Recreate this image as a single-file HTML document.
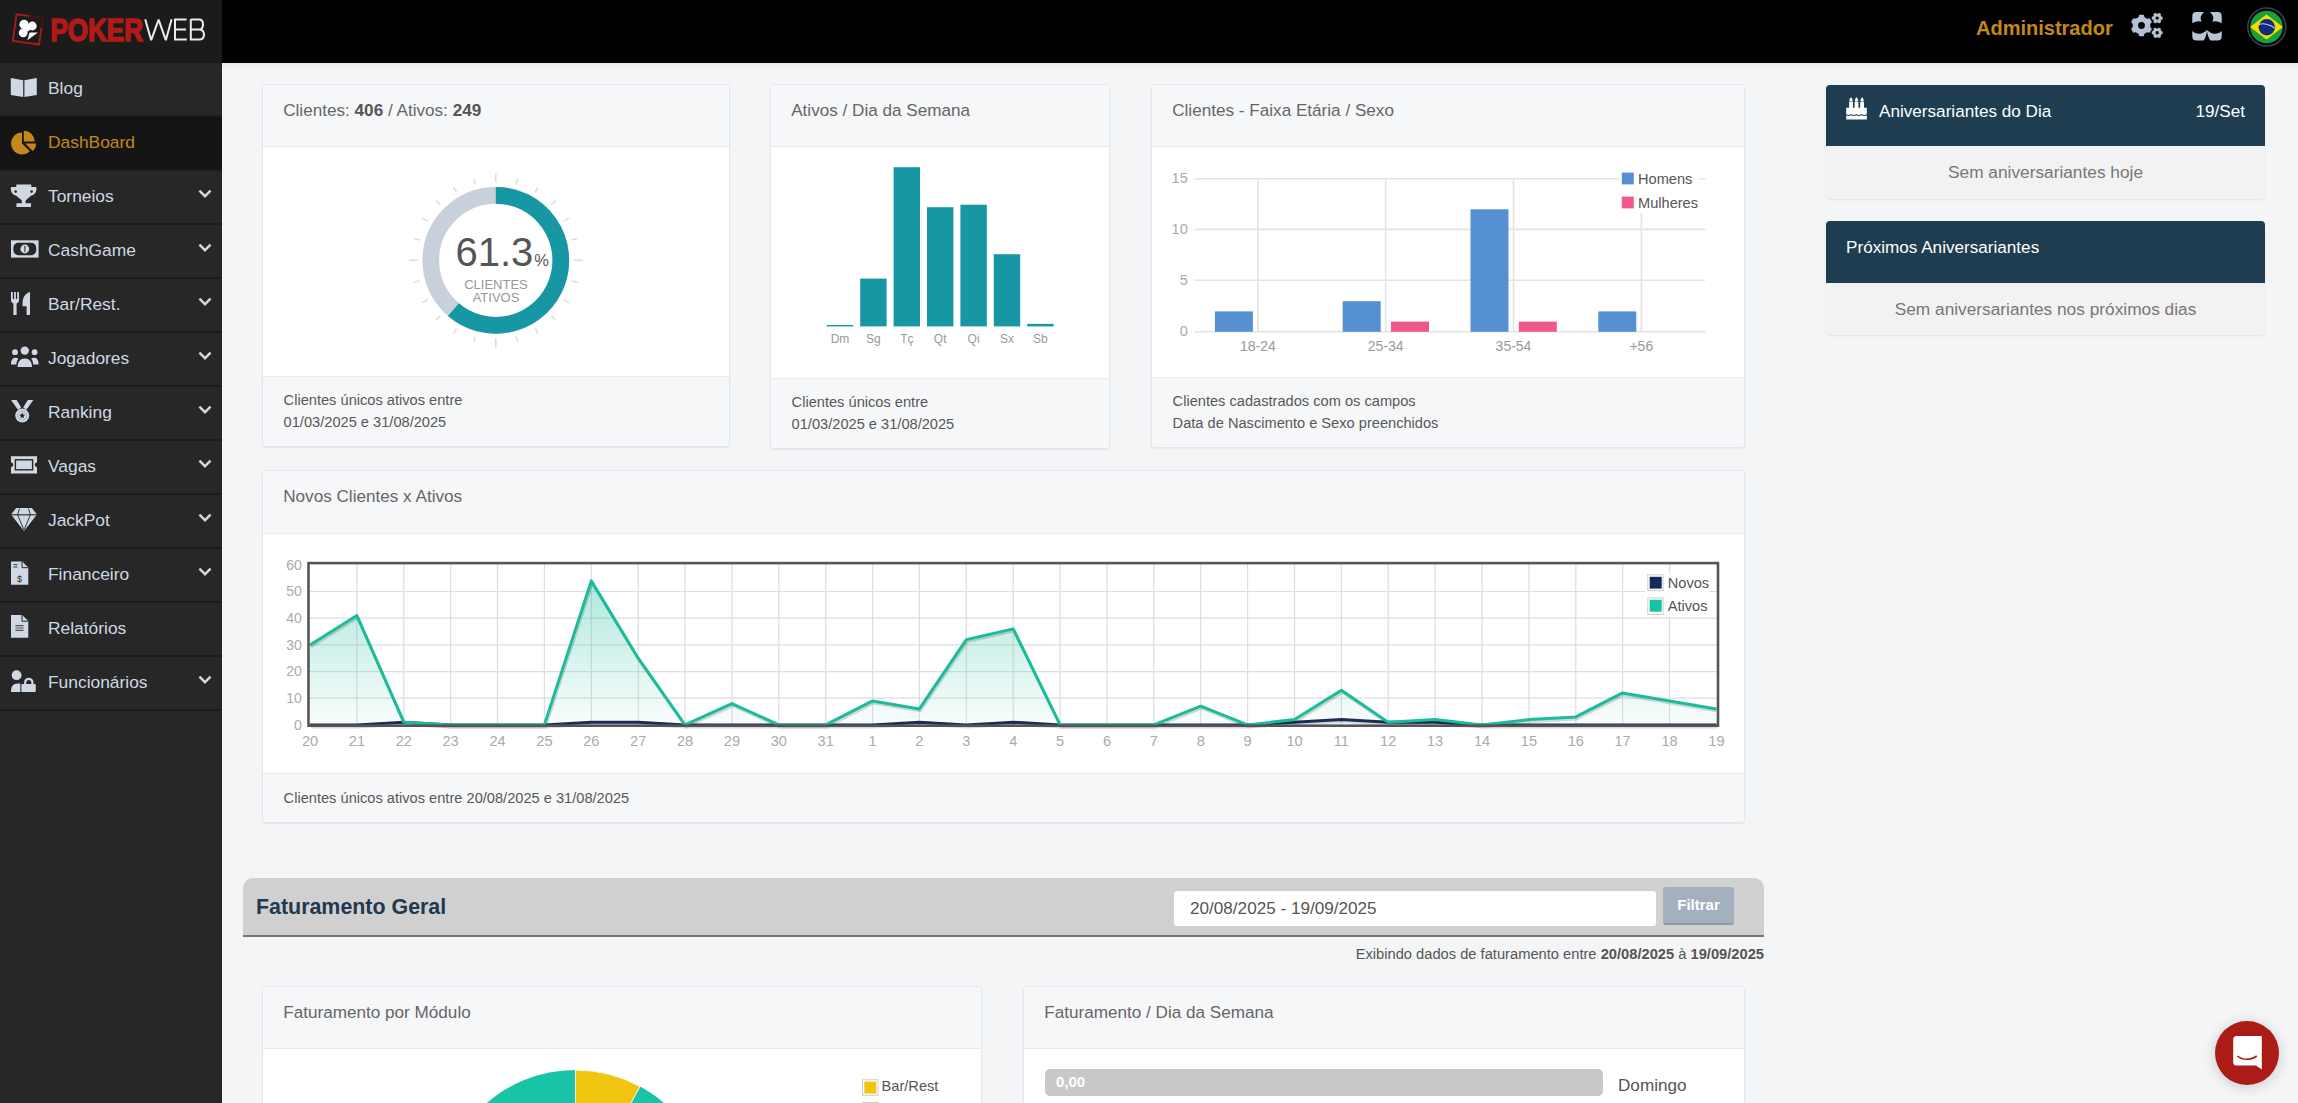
<!DOCTYPE html>
<html><head><meta charset="utf-8">
<style>
*{box-sizing:border-box;margin:0;padding:0}
html,body{width:2298px;height:1103px;overflow:hidden;background:#f4f5f7;font-family:"Liberation Sans",sans-serif;position:relative}
.abs{position:absolute}
#top{position:absolute;left:0;top:0;width:2298px;height:63px;background:#000}
#logo{position:absolute;left:0;top:0;width:222px;height:63px;background:#1b1b1b}
#side{position:absolute;left:0;top:63px;width:222px;height:1040px;background:#272727}
.mi{position:absolute;left:0;width:222px;height:54px;border-bottom:2px solid #1b1b1b;color:#cfd8e3;font-size:17.4px}
.mi .t{position:absolute;left:48px;top:15px;line-height:20px}
.mi.act{background:#141414;color:#c4871a}
.mi svg.ic{position:absolute;left:0;top:0}
.chev{position:absolute;left:198.3px;top:17.8px}
#shadow{position:absolute;left:222px;top:63px;width:2076px;height:8px;background:linear-gradient(#e8e9eb,#f4f5f7)}
.card{position:absolute;background:#fff;border:1px solid #e3e6ea;border-radius:4px;box-shadow:0 1px 2px rgba(0,0,0,0.06);overflow:hidden}
.card .hd{position:absolute;left:0;top:0;right:0;background:#f6f7f9;border-bottom:1px solid #e6e9ed;color:#666;font-size:17.14px}
.card .hd span{position:absolute;left:20.2px;line-height:20px}
.card .ft{position:absolute;left:0;bottom:0;right:0;background:#f6f7f9;border-top:1px solid #e6e9ed;color:#585858;font-size:14.63px;line-height:21.7px}
.card .ft div{position:absolute;left:20.6px}
.bd{position:absolute;left:1826px;width:439px;border-radius:4px;overflow:hidden;box-shadow:0 1px 2px rgba(0,0,0,0.08)}
.bd .h{position:absolute;left:0;top:0;width:439px;height:61px;background:#1e3d50;color:#fff;font-size:17.14px}
.bd .b{position:absolute;left:0;top:61px;width:439px;height:53px;background:#f2f2f2;color:#777;font-size:17.3px;text-align:center;line-height:20px}
</style></head><body>
<div id="top"></div>
<div id="logo"></div>
<div id="side"></div>
<div id="shadow"></div>
<div class="mi" style="top:63px"><svg class="ic" width="45" height="52" viewBox="0 0 45 52"><path d="M10.8,15 L23.2,17.2 L23.2,34 L10.8,32 Z M24.4,17.2 L36.8,15 L36.8,32 L24.4,34 Z" fill="#cfd8e3"/></svg><span class="t">Blog</span></div>
<div class="mi act" style="top:117px"><svg class="ic" width="45" height="52" viewBox="0 0 45 52"><path d="M22,26.5 L22,15.5 A11,11 0 1,0 29.8,34.3 Z" fill="#c4871a"/><path d="M23.8,24.6 L23.8,13.8 A10.8,10.8 0 0,1 34.6,24.6 Z" fill="#c4871a"/><path d="M25.2,26.4 L36,26.4 A10.8,10.8 0 0,1 32.8,34 Z" fill="#c4871a"/></svg><span class="t">DashBoard</span></div>
<div class="mi" style="top:171px"><svg class="ic" width="45" height="52" viewBox="0 0 45 52"><path d="M16.3,13.4 H31.3 V15.9 H36.4 V18.6 C36.4,21.6 34,24.4 30.6,25 C29.2,26.6 27.2,28 25.6,29.4 V32.2 H31 V36 H16.4 V32.2 H21.8 V29.4 C20.2,28 18.2,26.6 16.8,25 C13.4,24.4 10.9,21.6 10.9,18.6 V15.9 H16.3 Z" fill="#cfd8e3"/><circle cx="15.7" cy="20.6" r="1.3" fill="#272727"/><circle cx="31.6" cy="20.6" r="1.3" fill="#272727"/></svg><span class="t">Torneios</span><svg class="chev" width="14" height="10" viewBox="0 0 14 10"><path d="M1.4,1.6 L7,7.2 L12.6,1.6" stroke="#cfd8e3" stroke-width="2.4" fill="none"/></svg></div>
<div class="mi" style="top:225px"><svg class="ic" width="45" height="52" viewBox="0 0 45 52"><rect x="11" y="15.3" width="27.6" height="17.3" fill="#cfd8e3"/><rect x="13.4" y="17.7" width="22.8" height="12.5" rx="5" fill="#272727"/><circle cx="24.8" cy="24" r="4.4" fill="#cfd8e3"/><path d="M24,21.6 L25.4,21 V27 H24.4 V22.4 Z" fill="#272727"/></svg><span class="t">CashGame</span><svg class="chev" width="14" height="10" viewBox="0 0 14 10"><path d="M1.4,1.6 L7,7.2 L12.6,1.6" stroke="#cfd8e3" stroke-width="2.4" fill="none"/></svg></div>
<div class="mi" style="top:279px"><svg class="ic" width="45" height="52" viewBox="0 0 45 52"><path d="M11,13 H12.8 V20 H14.1 V13 H15.9 V20 H17.2 V13 H19 V21.5 C19,23.1 17.8,24.2 16.6,24.4 V36 H13.4 V24.4 C12.2,24.2 11,23.1 11,21.5 Z" fill="#cfd8e3"/><path d="M30,13 C25.6,14.2 22.6,18.4 22.6,24 V27.2 H26.6 V36 H30 Z" fill="#cfd8e3"/></svg><span class="t">Bar/Rest.</span><svg class="chev" width="14" height="10" viewBox="0 0 14 10"><path d="M1.4,1.6 L7,7.2 L12.6,1.6" stroke="#cfd8e3" stroke-width="2.4" fill="none"/></svg></div>
<div class="mi" style="top:333px"><svg class="ic" width="45" height="52" viewBox="0 0 45 52"><circle cx="24.8" cy="17.6" r="4.2" fill="#cfd8e3"/><path d="M17.6,34 C17.6,28.6 20.4,25.4 24.8,25.4 C29.2,25.4 32,28.6 32,34 Z" fill="#cfd8e3"/><circle cx="15" cy="19.2" r="2.9" fill="#cfd8e3"/><path d="M11,31.4 C11,27.4 12.6,24.8 15.4,24.8 C16.6,24.8 17.6,25.2 18.4,25.8 C17,27.4 16.4,29.4 16.4,31.4 Z" fill="#cfd8e3"/><circle cx="34.6" cy="19.2" r="2.9" fill="#cfd8e3"/><path d="M38.6,31.4 C38.6,27.4 37,24.8 34.2,24.8 C33,24.8 32,25.2 31.2,25.8 C32.6,27.4 33.2,29.4 33.2,31.4 Z" fill="#cfd8e3"/></svg><span class="t">Jogadores</span><svg class="chev" width="14" height="10" viewBox="0 0 14 10"><path d="M1.4,1.6 L7,7.2 L12.6,1.6" stroke="#cfd8e3" stroke-width="2.4" fill="none"/></svg></div>
<div class="mi" style="top:387px"><svg class="ic" width="45" height="52" viewBox="0 0 45 52"><path d="M11,13 H16.6 L21.2,20.6 L18,22.8 Z M33.4,13 H27.8 L23.2,20.6 L26.4,22.8 Z" fill="#cfd8e3"/><circle cx="22.2" cy="28.6" r="7" fill="#cfd8e3"/><circle cx="22.2" cy="28.6" r="4.6" fill="none" stroke="#9aa4ae" stroke-width="0.8"/><path d="M22.2,25.6 L23.1,27.6 L25.2,27.8 L23.6,29.2 L24.1,31.3 L22.2,30.2 L20.3,31.3 L20.8,29.2 L19.2,27.8 L21.3,27.6 Z" fill="#272727"/></svg><span class="t">Ranking</span><svg class="chev" width="14" height="10" viewBox="0 0 14 10"><path d="M1.4,1.6 L7,7.2 L12.6,1.6" stroke="#cfd8e3" stroke-width="2.4" fill="none"/></svg></div>
<div class="mi" style="top:441px"><svg class="ic" width="45" height="52" viewBox="0 0 45 52"><path d="M11,15.2 H37 V21.6 A2.2,2.2 0 0,0 37,26 V32.4 H11 V26 A2.2,2.2 0 0,0 11,21.6 Z" fill="#cfd8e3"/><rect x="15.4" y="18.8" width="17.2" height="10" fill="#cfd8e3" stroke="#272727" stroke-width="1.4"/></svg><span class="t">Vagas</span><svg class="chev" width="14" height="10" viewBox="0 0 14 10"><path d="M1.4,1.6 L7,7.2 L12.6,1.6" stroke="#cfd8e3" stroke-width="2.4" fill="none"/></svg></div>
<div class="mi" style="top:495px"><svg class="ic" width="45" height="52" viewBox="0 0 45 52"><path d="M16.2,13 H31.8 L37,19.6 L24,36 L11,19.6 Z" fill="#cfd8e3"/><path d="M11,19.8 H37" stroke="#272727" stroke-width="1.1"/><path d="M19.5,13.5 L17.6,19.8 L24,35 M28.5,13.5 L30.4,19.8 L24,35" stroke="#272727" stroke-width="0.9" fill="none"/></svg><span class="t">JackPot</span><svg class="chev" width="14" height="10" viewBox="0 0 14 10"><path d="M1.4,1.6 L7,7.2 L12.6,1.6" stroke="#cfd8e3" stroke-width="2.4" fill="none"/></svg></div>
<div class="mi" style="top:549px"><svg class="ic" width="45" height="52" viewBox="0 0 45 52"><path d="M11,12.4 H22.2 L28.3,18.5 V35.7 H11 Z" fill="#cfd8e3"/><path d="M22,12.6 V18.7 H28.1" stroke="#272727" stroke-width="1" fill="none"/><path d="M13.4,15.6 H17.4 M13.4,18 H17.4" stroke="#272727" stroke-width="0.9"/><text x="19.6" y="32.6" font-size="9" font-family="Liberation Sans" text-anchor="middle" fill="#272727">$</text></svg><span class="t">Financeiro</span><svg class="chev" width="14" height="10" viewBox="0 0 14 10"><path d="M1.4,1.6 L7,7.2 L12.6,1.6" stroke="#cfd8e3" stroke-width="2.4" fill="none"/></svg></div>
<div class="mi" style="top:603px"><svg class="ic" width="45" height="52" viewBox="0 0 45 52"><path d="M11,11.9 H22.2 L28.3,18 V34.8 H11 Z" fill="#cfd8e3"/><path d="M22,12.1 V18.2 H28.1" stroke="#272727" stroke-width="1" fill="none"/><path d="M15.4,22.6 H23.6 M15.4,25 H23.6 M15.4,27.4 H23.6" stroke="#555" stroke-width="1.1"/></svg><span class="t">Relatórios</span></div>
<div class="mi" style="top:657px"><svg class="ic" width="45" height="52" viewBox="0 0 45 52"><circle cx="16.6" cy="18.2" r="4.9" fill="#cfd8e3"/><path d="M11,35 C11,29.4 13,26.6 17.6,26.6 H20.4 V35 Z" fill="#cfd8e3"/><path d="M25.2,27.4 V25.4 A3.6,3.6 0 0,1 32.4,25.4 V27.4" stroke="#cfd8e3" stroke-width="2.2" fill="none"/><rect x="21.4" y="27" width="14.4" height="8" rx="1" fill="#cfd8e3"/></svg><span class="t">Funcionários</span><svg class="chev" width="14" height="10" viewBox="0 0 14 10"><path d="M1.4,1.6 L7,7.2 L12.6,1.6" stroke="#cfd8e3" stroke-width="2.4" fill="none"/></svg></div>
<svg class="abs" style="left:0;top:0" width="222" height="63" viewBox="0 0 222 63">
<g fill="none" stroke-width="1.8" stroke-linejoin="round">
<path d="M29.8,16.2 L16.5,14.4 L12.8,40.8 L39.1,44.5 L41.4,28" stroke="#aa1b19"/>
<path d="M29.8,16.2 L42.8,18.2 L41.4,28" stroke="#4a1412"/>
</g>
<g fill="#fff">
<circle cx="24.1" cy="24.5" r="4.7"/><circle cx="32.3" cy="26" r="4.4"/><circle cx="23.2" cy="32.8" r="4.4"/><circle cx="27" cy="28.4" r="3"/>
<path d="M29.6,32.4 L37.9,32.6 L27.4,40.2 Z"/>
</g>
<text x="50.5" y="41" font-family="Liberation Sans" font-weight="bold" font-size="30.6" fill="#b21a18" stroke="#b21a18" stroke-width="1.6" textLength="92.5" lengthAdjust="spacingAndGlyphs">POKER</text>
<g fill="none" stroke="#ececec" stroke-width="2" stroke-linejoin="miter">
<path d="M145.2,19.2 L151.2,40.2 L158.6,19.6 L165.8,40.2 L171.6,19.2" stroke-linejoin="bevel"/>
<path d="M186.6,19.6 H175 V39.6 H186.8 M175,29.6 H186"/>
<path d="M190.8,19.6 H199 C202,19.6 203,21.6 203,24.4 C203,27.2 201.6,29.6 198.6,29.6 H190.8 M198.6,29.6 C202.4,29.6 204,31.6 204,34.6 C204,38 202.4,39.6 199.2,39.6 H190.8 V19.2"/>
</g>
</svg>
<div class="abs" style="left:1976px;top:16px;font-size:20px;font-weight:bold;color:#c4871a;line-height:24px">Administrador</div>
<svg class="abs" style="left:2125px;top:8px" width="45" height="36" viewBox="2125 8 45 36">
<g fill="#b4c2d6" fill-rule="evenodd"><path d="M2138.49,17.13 L2139.21,14.74 L2143.79,14.74 L2144.51,17.13 L2147.24,18.70 L2149.67,18.14 L2151.96,22.10 L2150.26,23.92 L2150.26,27.08 L2151.96,28.90 L2149.67,32.86 L2147.24,32.30 L2144.51,33.87 L2143.79,36.26 L2139.21,36.26 L2138.49,33.87 L2135.76,32.30 L2133.33,32.86 L2131.04,28.90 L2132.74,27.08 L2132.74,23.92 L2131.04,22.10 L2133.33,18.14 L2135.76,18.70 Z M2144.90,25.50 A3.4,3.4 0 1,0 2138.10,25.50 A3.4,3.4 0 1,0 2144.90,25.50 Z"/><path d="M2157.77,13.74 L2158.79,12.73 L2161.05,14.04 L2160.69,15.42 L2161.27,16.42 L2162.65,16.79 L2162.65,19.41 L2161.27,19.78 L2160.69,20.78 L2161.05,22.16 L2158.79,23.47 L2157.77,22.46 L2156.63,22.46 L2155.61,23.47 L2153.35,22.16 L2153.71,20.78 L2153.13,19.78 L2151.75,19.41 L2151.75,16.79 L2153.13,16.42 L2153.71,15.42 L2153.35,14.04 L2155.61,12.73 L2156.63,13.74 Z M2158.90,18.10 A1.7,1.7 0 1,0 2155.50,18.10 A1.7,1.7 0 1,0 2158.90,18.10 Z"/><path d="M2157.77,28.44 L2158.79,27.43 L2161.05,28.74 L2160.69,30.12 L2161.27,31.12 L2162.65,31.49 L2162.65,34.11 L2161.27,34.48 L2160.69,35.48 L2161.05,36.86 L2158.79,38.17 L2157.77,37.16 L2156.63,37.16 L2155.61,38.17 L2153.35,36.86 L2153.71,35.48 L2153.13,34.48 L2151.75,34.11 L2151.75,31.49 L2153.13,31.12 L2153.71,30.12 L2153.35,28.74 L2155.61,27.43 L2156.63,28.44 Z M2158.90,32.80 A1.7,1.7 0 1,0 2155.50,32.80 A1.7,1.7 0 1,0 2158.90,32.80 Z"/></g>
</svg>
<svg class="abs" style="left:2190px;top:10px" width="34" height="33" viewBox="2190 10 34 33">
<g fill="#b8c5d6">
<path d="M2192.3,23.3 V16.1 Q2192.3,12.1 2196.3,12.1 H2204 Q2198.6,17 2201.7,21.7 Q2197,20.4 2192.3,23.3 Z"/>
<path d="M2221.7,23.3 V16.1 Q2221.7,12.1 2217.7,12.1 H2210 Q2215.4,17 2212.3,21.7 Q2217,20.4 2221.7,23.3 Z"/>
<path d="M2192.3,30.9 Q2198.4,37.2 2207.1,29.9 Q2206.4,37 2203.5,40.4 H2196.3 Q2192.3,40.4 2192.3,36.4 Z"/>
<path d="M2221.7,30.9 Q2215.6,37.2 2206.9,29.9 Q2207.6,37 2210.5,40.4 H2217.7 Q2221.7,40.4 2221.7,36.4 Z"/>
</g>
</svg>
<svg class="abs" style="left:2245px;top:5px" width="44" height="44" viewBox="2245 5 44 44">
<circle cx="2266.8" cy="27" r="19" fill="none" stroke="#2b4253" stroke-width="1.6"/>
<defs><clipPath id="fc"><circle cx="2266.5" cy="27" r="16.2"/></clipPath></defs>
<g clip-path="url(#fc)">
<rect x="2248" y="8" width="38" height="38" fill="#17a03b"/>
<path d="M2266.5,14.6 L2283,27 L2266.5,39.6 L2250,27 Z" fill="#f4dc00"/>
<circle cx="2266.8" cy="27.2" r="8.2" fill="#0f2a80"/>
<path d="M2259,24.4 C2263,23 2270,24 2274.6,28.2" stroke="#c8d4e8" stroke-width="1.1" fill="none"/>
</g>
</svg>

<div class="card" style="left:262px;top:84px;width:468px;height:363px">
 <div class="hd" style="height:62px"><span style="top:15px">Clientes: <b style="color:#555">406</b> / Ativos: <b style="color:#555">249</b></span></div>
 <div class="ft" style="height:70.5px"><div style="top:13.3px">Clientes únicos ativos entre<br>01/03/2025 e 31/08/2025</div></div>
</div>
<div class="card" style="left:770px;top:84px;width:340px;height:365px">
 <div class="hd" style="height:62px"><span style="top:15px">Ativos / Dia da Semana</span></div>
 <div class="ft" style="height:70px"><div style="top:13.3px">Clientes únicos entre<br>01/03/2025 e 31/08/2025</div></div>
</div>
<div class="card" style="left:1151px;top:84px;width:594px;height:364px">
 <div class="hd" style="height:62px"><span style="top:15px">Clientes - Faixa Etária / Sexo</span></div>
 <div class="ft" style="height:70px"><div style="top:13.3px">Clientes cadastrados com os campos<br>Data de Nascimento e Sexo preenchidos</div></div>
</div>
<div class="card" style="left:262px;top:470px;width:1483px;height:353px">
 <div class="hd" style="height:63px"><span style="top:15px">Novos Clientes x Ativos</span></div>
 <div class="ft" style="height:49px"><div style="top:13.9px">Clientes únicos ativos entre 20/08/2025 e 31/08/2025</div></div>
</div>
<div class="card" style="left:262px;top:986px;width:720px;height:300px">
 <div class="hd" style="height:62px"><span style="top:15px">Faturamento por Módulo</span></div>
</div>
<div class="card" style="left:1023px;top:986px;width:722px;height:300px">
 <div class="hd" style="height:62px"><span style="top:15px">Faturamento / Dia da Semana</span></div>
</div>
<div class="bd" style="top:85px;height:114px">
 <div class="h"><svg class="abs" style="left:19px;top:11px" width="24" height="26" viewBox="0 0 24 26"><g fill="#fff"><rect x="4.1" y="5.6" width="3.8" height="6.4"/><path d="M6,1 C6.8,2.4 7.6,3.4 7.6,4.2 C7.6,4.9 6.9,5.2 6,5.2 C5.1,5.2 4.4,4.9 4.4,4.2 C4.4,3.4 5.2,2.4 6,1 Z"/><rect x="9.6" y="5.6" width="3.8" height="6.4"/><path d="M11.5,1 C12.3,2.4 13.1,3.4 13.1,4.2 C13.1,4.9 12.4,5.2 11.5,5.2 C10.6,5.2 9.9,4.9 9.9,4.2 C9.9,3.4 10.7,2.4 11.5,1 Z"/><rect x="15.200000000000001" y="5.6" width="3.8" height="6.4"/><path d="M17.1,1 C17.900000000000002,2.4 18.700000000000003,3.4 18.700000000000003,4.2 C18.700000000000003,4.9 18.0,5.2 17.1,5.2 C16.200000000000003,5.2 15.500000000000002,4.9 15.500000000000002,4.2 C15.500000000000002,3.4 16.3,2.4 17.1,1 Z"/><path d="M1.2,11.8 H21.8 V18 C20,19.2 18.4,19.2 16.6,18 C14.8,19.2 13.2,19.2 11.4,18 C9.6,19.2 8,19.2 6.2,18 C4.4,19.2 2.8,19.2 1.2,18 Z"/><path d="M1.2,19.2 C2.8,20.3 4.4,20.3 6.2,19.2 C8,20.3 9.6,20.3 11.4,19.2 C13.2,20.3 14.8,20.3 16.6,19.2 C18.4,20.3 20,20.3 21.8,19.2 V23.6 H1.2 Z"/></g></svg>
 <span class="abs" style="left:53px;top:15.5px;line-height:20px">Aniversariantes do Dia</span><span class="abs" style="right:20px;top:15.5px;line-height:20px">19/Set</span></div>
 <div class="b"><span class="abs" style="left:0;right:0;top:16.2px">Sem aniversariantes hoje</span></div>
</div>
<div class="bd" style="top:221px;height:114px">
 <div class="h" style="height:61.5px"><span class="abs" style="left:20px;top:15.6px;line-height:20px">Próximos Aniversariantes</span></div>
 <div class="b" style="top:61.5px;height:52.5px"><span class="abs" style="left:0;right:0;top:16.2px">Sem aniversariantes nos próximos dias</span></div>
</div>
<div class="abs" style="left:243px;top:878px;width:1521px;height:59px;background:#d0d0d0;border-radius:10px 10px 0 0;border-bottom:2px solid #777"></div>
<div class="abs" style="left:256px;top:895px;font-size:21.4px;font-weight:bold;color:#21394d;line-height:24px">Faturamento Geral</div>
<div class="abs" style="left:1174px;top:891px;width:482px;height:35px;background:#fff;border-radius:3px"></div>
<div class="abs" style="left:1190px;top:898px;font-size:17.14px;color:#555;line-height:20px">20/08/2025 - 19/09/2025</div>
<div class="abs" style="left:1663px;top:886.5px;width:71px;height:38.5px;background:#a4b0bd;border-radius:3px;border-bottom:2px solid #8e9aa6;color:#fff;font-weight:bold;font-size:15px;text-align:center;line-height:36px">Filtrar</div>
<div class="abs" style="right:534px;top:944px;font-size:14.69px;color:#555;line-height:20px">Exibindo dados de faturamento entre <b>20/08/2025</b> à <b>19/09/2025</b></div>
<div class="abs" style="left:1045px;top:1069px;width:558px;height:27px;background:#c8c8c8;border-radius:5px;color:#fff;font-weight:bold;font-size:15px;line-height:26px;padding-left:11px">0,00</div>
<div class="abs" style="left:1618px;top:1075px;font-size:17.14px;color:#555;line-height:20px">Domingo</div>
<div class="abs" style="left:2215px;top:1021px;width:64px;height:64px;border-radius:50%;background:#ab1c17;box-shadow:0 2px 14px rgba(0,0,0,0.18)"></div>
<svg class="abs" style="left:2230px;top:1033px" width="36" height="40" viewBox="2230 1033 36 40">
<path d="M2236.4,1036 H2260.8 C2261.4,1036 2261.8,1036.5 2261.8,1037 V1069.4 L2256,1065.6 H2236.4 C2234.6,1065.6 2233.2,1064.4 2233.2,1062.6 V1039.2 C2233.2,1037.4 2234.6,1036 2236.4,1036 Z" fill="#fff"/>
<path d="M2237.4,1056 C2242.4,1060.4 2251,1060.4 2256.8,1056" stroke="#ab1c17" stroke-width="1.6" fill="none"/>
</svg>

<svg class="abs" style="left:0;top:0" width="2298" height="1103" viewBox="0 0 2298 1103" font-family="Liberation Sans">
<circle cx="495.8" cy="260.3" r="65" fill="none" stroke="#c8d1db" stroke-width="16.7"/>
<path d="M495.8,195.3 A65,65 0 1,1 453.43,309.59" fill="none" stroke="#1797a3" stroke-width="16.7"/>
<path d="M495.80,182.30L495.80,173.30M516.12,184.47L517.67,178.68M535.05,192.32L538.05,187.12M551.31,204.79L555.55,200.55M563.78,221.05L568.98,218.05M571.63,239.98L577.42,238.43M573.80,260.30L582.80,260.30M571.63,280.62L577.42,282.17M563.78,299.55L568.98,302.55M551.31,315.81L555.55,320.05M535.05,328.28L538.05,333.48M516.12,336.13L517.67,341.92M495.80,338.30L495.80,347.30M475.48,336.13L473.93,341.92M456.55,328.28L453.55,333.48M440.29,315.81L436.05,320.05M427.82,299.55L422.62,302.55M419.97,280.62L414.18,282.17M417.80,260.30L408.80,260.30M419.97,239.98L414.18,238.43M427.82,221.05L422.62,218.05M440.29,204.79L436.05,200.55M456.55,192.32L453.55,187.12M475.48,184.47L473.93,178.68" stroke="#dcdcdc" stroke-width="1.5"/>
<text x="455.5" y="265.8" font-size="40" fill="#555">61.3</text>
<text x="534.3" y="265.8" font-size="16.5" fill="#555">%</text>
<text x="496" y="288.7" font-size="13" fill="#999" text-anchor="middle">CLIENTES</text>
<text x="496" y="302" font-size="13" fill="#999" text-anchor="middle">ATIVOS</text>
<rect x="826.8" y="325.0" width="26.4" height="1.4" fill="#1797a3"/>
<text x="840.0" y="343.4" font-size="12" fill="#999" text-anchor="middle">Dm</text>
<rect x="860.2" y="278.6" width="26.4" height="47.8" fill="#1797a3"/>
<text x="873.4" y="343.4" font-size="12" fill="#999" text-anchor="middle">Sg</text>
<rect x="893.6" y="167.2" width="26.4" height="159.2" fill="#1797a3"/>
<text x="906.8" y="343.4" font-size="12" fill="#999" text-anchor="middle">Tç</text>
<rect x="927.0" y="207.2" width="26.4" height="119.2" fill="#1797a3"/>
<text x="940.2" y="343.4" font-size="12" fill="#999" text-anchor="middle">Qt</text>
<rect x="960.4" y="204.7" width="26.4" height="121.7" fill="#1797a3"/>
<text x="973.6" y="343.4" font-size="12" fill="#999" text-anchor="middle">Qi</text>
<rect x="993.8" y="254.2" width="26.4" height="72.2" fill="#1797a3"/>
<text x="1007.0" y="343.4" font-size="12" fill="#999" text-anchor="middle">Sx</text>
<rect x="1027.2" y="323.9" width="26.4" height="2.5" fill="#1797a3"/>
<text x="1040.4" y="343.4" font-size="12" fill="#999" text-anchor="middle">Sb</text>
<line x1="1194.4" y1="178.7" x2="1705.3" y2="178.7" stroke="#e4e4e4" stroke-width="1.6"/>
<text x="1187.8" y="183.3" font-size="14.6" fill="#aaa" text-anchor="end">15</text>
<line x1="1194.4" y1="229.4" x2="1705.3" y2="229.4" stroke="#e4e4e4" stroke-width="1.6"/>
<text x="1187.8" y="234.0" font-size="14.6" fill="#aaa" text-anchor="end">10</text>
<line x1="1194.4" y1="280.2" x2="1705.3" y2="280.2" stroke="#e4e4e4" stroke-width="1.6"/>
<text x="1187.8" y="284.8" font-size="14.6" fill="#aaa" text-anchor="end">5</text>
<line x1="1194.4" y1="331.8" x2="1705.3" y2="331.8" stroke="#e4e4e4" stroke-width="1.6"/>
<text x="1187.8" y="336.4" font-size="14.6" fill="#aaa" text-anchor="end">0</text>
<line x1="1257.9" y1="178.7" x2="1257.9" y2="331.8" stroke="#e4e4e4" stroke-width="1.6"/>
<line x1="1385.7" y1="178.7" x2="1385.7" y2="331.8" stroke="#e4e4e4" stroke-width="1.6"/>
<line x1="1513.5" y1="178.7" x2="1513.5" y2="331.8" stroke="#e4e4e4" stroke-width="1.6"/>
<line x1="1641.3" y1="213" x2="1641.3" y2="331.8" stroke="#e4e4e4" stroke-width="1.6"/>
<rect x="1214.9" y="311.4" width="38" height="20.4" fill="#5591d2"/>
<text x="1257.9" y="351.2" font-size="14" fill="#999" text-anchor="middle">18-24</text>
<rect x="1342.7" y="301.2" width="38" height="30.6" fill="#5591d2"/>
<rect x="1391.0" y="321.6" width="38" height="10.2" fill="#f0588b"/>
<text x="1385.7" y="351.2" font-size="14" fill="#999" text-anchor="middle">25-34</text>
<rect x="1470.5" y="209.3" width="38" height="122.5" fill="#5591d2"/>
<rect x="1518.8" y="321.6" width="38" height="10.2" fill="#f0588b"/>
<text x="1513.5" y="351.2" font-size="14" fill="#999" text-anchor="middle">35-54</text>
<rect x="1598.3" y="311.4" width="38" height="20.4" fill="#5591d2"/>
<text x="1641.3" y="351.2" font-size="14" fill="#999" text-anchor="middle">+56</text>
<rect x="1619" y="170" width="80" height="43" fill="#fff"/>
<rect x="1621.8" y="172.6" width="12" height="11.8" fill="#5591d2"/><text x="1638" y="183.6" font-size="14.6" fill="#555">Homens</text>
<rect x="1621.8" y="196.6" width="12" height="11.8" fill="#f0588b"/><text x="1638" y="207.6" font-size="14.6" fill="#555">Mulheres</text>
<path d="M309,698.2H1717M309,671.6H1717M309,644.9H1717M309,618.2H1717M309,591.5H1717M356.9,563V725M403.8,563V725M450.6,563V725M497.5,563V725M544.4,563V725M591.3,563V725M638.2,563V725M685.0,563V725M731.9,563V725M778.8,563V725M825.7,563V725M872.6,563V725M919.4,563V725M966.3,563V725M1013.2,563V725M1060.1,563V725M1107.0,563V725M1153.8,563V725M1200.7,563V725M1247.6,563V725M1294.5,563V725M1341.4,563V725M1388.2,563V725M1435.1,563V725M1482.0,563V725M1528.9,563V725M1575.8,563V725M1622.6,563V725M1669.5,563V725" stroke="#dedede" stroke-width="1.2"/>
<defs><linearGradient id="ga" x1="0" y1="580" x2="0" y2="725" gradientUnits="userSpaceOnUse"><stop offset="0" stop-color="#1abc9c" stop-opacity="0.35"/><stop offset="1" stop-color="#1abc9c" stop-opacity="0.02"/></linearGradient></defs>
<polygon points="310,725 310.0,644.9 356.9,615.6 403.8,722.2 450.6,724.9 497.5,724.9 544.4,724.9 591.3,580.9 638.2,658.2 685.0,724.9 731.9,703.6 778.8,724.9 825.7,724.9 872.6,700.9 919.4,708.9 966.3,639.6 1013.2,628.9 1060.1,724.9 1107.0,724.9 1153.8,724.9 1200.7,706.2 1247.6,724.9 1294.5,719.6 1341.4,690.2 1388.2,722.2 1435.1,719.6 1482.0,724.9 1528.9,719.6 1575.8,716.9 1622.6,692.9 1669.5,700.9 1716.4,708.9 1716.4,725" fill="url(#ga)"/>
<polyline points="310.0,724.9 356.9,724.9 403.8,722.2 450.6,724.9 497.5,724.9 544.4,724.9 591.3,722.2 638.2,722.2 685.0,724.9 731.9,724.9 778.8,724.9 825.7,724.9 872.6,724.9 919.4,722.2 966.3,724.9 1013.2,722.2 1060.1,724.9 1107.0,724.9 1153.8,724.9 1200.7,724.9 1247.6,724.9 1294.5,722.2 1341.4,719.6 1388.2,722.2 1435.1,722.2 1482.0,724.9 1528.9,724.9 1575.8,724.9 1622.6,724.9 1669.5,724.9 1716.4,724.9" fill="none" stroke="rgba(0,0,0,0.15)" stroke-width="3" transform="translate(1,2)"/>
<polyline points="310.0,724.9 356.9,724.9 403.8,722.2 450.6,724.9 497.5,724.9 544.4,724.9 591.3,722.2 638.2,722.2 685.0,724.9 731.9,724.9 778.8,724.9 825.7,724.9 872.6,724.9 919.4,722.2 966.3,724.9 1013.2,722.2 1060.1,724.9 1107.0,724.9 1153.8,724.9 1200.7,724.9 1247.6,724.9 1294.5,722.2 1341.4,719.6 1388.2,722.2 1435.1,722.2 1482.0,724.9 1528.9,724.9 1575.8,724.9 1622.6,724.9 1669.5,724.9 1716.4,724.9" fill="none" stroke="#1c2b5a" stroke-width="3" stroke-linejoin="round"/>
<polyline points="310.0,644.9 356.9,615.6 403.8,722.2 450.6,724.9 497.5,724.9 544.4,724.9 591.3,580.9 638.2,658.2 685.0,724.9 731.9,703.6 778.8,724.9 825.7,724.9 872.6,700.9 919.4,708.9 966.3,639.6 1013.2,628.9 1060.1,724.9 1107.0,724.9 1153.8,724.9 1200.7,706.2 1247.6,724.9 1294.5,719.6 1341.4,690.2 1388.2,722.2 1435.1,719.6 1482.0,724.9 1528.9,719.6 1575.8,716.9 1622.6,692.9 1669.5,700.9 1716.4,708.9" fill="none" stroke="rgba(0,0,0,0.15)" stroke-width="3" transform="translate(1,2)"/>
<polyline points="310.0,644.9 356.9,615.6 403.8,722.2 450.6,724.9 497.5,724.9 544.4,724.9 591.3,580.9 638.2,658.2 685.0,724.9 731.9,703.6 778.8,724.9 825.7,724.9 872.6,700.9 919.4,708.9 966.3,639.6 1013.2,628.9 1060.1,724.9 1107.0,724.9 1153.8,724.9 1200.7,706.2 1247.6,724.9 1294.5,719.6 1341.4,690.2 1388.2,722.2 1435.1,719.6 1482.0,724.9 1528.9,719.6 1575.8,716.9 1622.6,692.9 1669.5,700.9 1716.4,708.9" fill="none" stroke="#1abc9c" stroke-width="3" stroke-linejoin="round"/>
<rect x="308.5" y="563.1" width="1409.5" height="162.6" fill="none" stroke="#555" stroke-width="2.6"/>
<text x="301.8" y="729.5" font-size="14" fill="#aaa" text-anchor="end">0</text>
<text x="301.8" y="702.8" font-size="14" fill="#aaa" text-anchor="end">10</text>
<text x="301.8" y="676.2" font-size="14" fill="#aaa" text-anchor="end">20</text>
<text x="301.8" y="649.5" font-size="14" fill="#aaa" text-anchor="end">30</text>
<text x="301.8" y="622.8" font-size="14" fill="#aaa" text-anchor="end">40</text>
<text x="301.8" y="596.1" font-size="14" fill="#aaa" text-anchor="end">50</text>
<text x="301.8" y="569.5" font-size="14" fill="#aaa" text-anchor="end">60</text>
<text x="310.0" y="746.2" font-size="14.6" fill="#aaa" text-anchor="middle">20</text>
<text x="356.9" y="746.2" font-size="14.6" fill="#aaa" text-anchor="middle">21</text>
<text x="403.8" y="746.2" font-size="14.6" fill="#aaa" text-anchor="middle">22</text>
<text x="450.6" y="746.2" font-size="14.6" fill="#aaa" text-anchor="middle">23</text>
<text x="497.5" y="746.2" font-size="14.6" fill="#aaa" text-anchor="middle">24</text>
<text x="544.4" y="746.2" font-size="14.6" fill="#aaa" text-anchor="middle">25</text>
<text x="591.3" y="746.2" font-size="14.6" fill="#aaa" text-anchor="middle">26</text>
<text x="638.2" y="746.2" font-size="14.6" fill="#aaa" text-anchor="middle">27</text>
<text x="685.0" y="746.2" font-size="14.6" fill="#aaa" text-anchor="middle">28</text>
<text x="731.9" y="746.2" font-size="14.6" fill="#aaa" text-anchor="middle">29</text>
<text x="778.8" y="746.2" font-size="14.6" fill="#aaa" text-anchor="middle">30</text>
<text x="825.7" y="746.2" font-size="14.6" fill="#aaa" text-anchor="middle">31</text>
<text x="872.6" y="746.2" font-size="14.6" fill="#aaa" text-anchor="middle">1</text>
<text x="919.4" y="746.2" font-size="14.6" fill="#aaa" text-anchor="middle">2</text>
<text x="966.3" y="746.2" font-size="14.6" fill="#aaa" text-anchor="middle">3</text>
<text x="1013.2" y="746.2" font-size="14.6" fill="#aaa" text-anchor="middle">4</text>
<text x="1060.1" y="746.2" font-size="14.6" fill="#aaa" text-anchor="middle">5</text>
<text x="1107.0" y="746.2" font-size="14.6" fill="#aaa" text-anchor="middle">6</text>
<text x="1153.8" y="746.2" font-size="14.6" fill="#aaa" text-anchor="middle">7</text>
<text x="1200.7" y="746.2" font-size="14.6" fill="#aaa" text-anchor="middle">8</text>
<text x="1247.6" y="746.2" font-size="14.6" fill="#aaa" text-anchor="middle">9</text>
<text x="1294.5" y="746.2" font-size="14.6" fill="#aaa" text-anchor="middle">10</text>
<text x="1341.4" y="746.2" font-size="14.6" fill="#aaa" text-anchor="middle">11</text>
<text x="1388.2" y="746.2" font-size="14.6" fill="#aaa" text-anchor="middle">12</text>
<text x="1435.1" y="746.2" font-size="14.6" fill="#aaa" text-anchor="middle">13</text>
<text x="1482.0" y="746.2" font-size="14.6" fill="#aaa" text-anchor="middle">14</text>
<text x="1528.9" y="746.2" font-size="14.6" fill="#aaa" text-anchor="middle">15</text>
<text x="1575.8" y="746.2" font-size="14.6" fill="#aaa" text-anchor="middle">16</text>
<text x="1622.6" y="746.2" font-size="14.6" fill="#aaa" text-anchor="middle">17</text>
<text x="1669.5" y="746.2" font-size="14.6" fill="#aaa" text-anchor="middle">18</text>
<text x="1716.4" y="746.2" font-size="14.6" fill="#aaa" text-anchor="middle">19</text>
<rect x="1645" y="572.7" width="64" height="43.8" fill="rgba(255,255,255,0.85)"/>
<rect x="1647.8" y="574.8" width="15.3" height="15.5" fill="#fff" stroke="#ccc" stroke-width="1"/><rect x="1649.7" y="576.8" width="12" height="11.8" fill="#132a5a"/><text x="1667.8" y="587.6" font-size="14.6" fill="#555">Novos</text>
<rect x="1647.8" y="597.9" width="15.3" height="16.5" fill="#fff" stroke="#ccc" stroke-width="1"/><rect x="1649.7" y="599.7" width="12" height="12" fill="#16c3a4"/><text x="1667.8" y="610.8" font-size="14.6" fill="#555">Ativos</text>
<circle cx="575.4" cy="1205.3" r="135.3" fill="#19c3a5"/>
<path d="M575.4,1205.3 L575.4,1070.0 A135.3,135.3 0 0,1 640.0,1086.4 Z" fill="#f1c40f" stroke="#fff" stroke-width="1"/>
<rect x="862.5" y="1079.8" width="15.5" height="15.5" fill="#fff" stroke="#ccc" stroke-width="1"/><rect x="864.3" y="1081.6" width="12" height="12" fill="#f1c40f"/><text x="881.6" y="1091" font-size="14.6" fill="#555">Bar/Rest</text>
<rect x="862.5" y="1102.5" width="15.5" height="15.5" fill="#fff" stroke="#ccc" stroke-width="1"/>
</svg>
</body></html>
